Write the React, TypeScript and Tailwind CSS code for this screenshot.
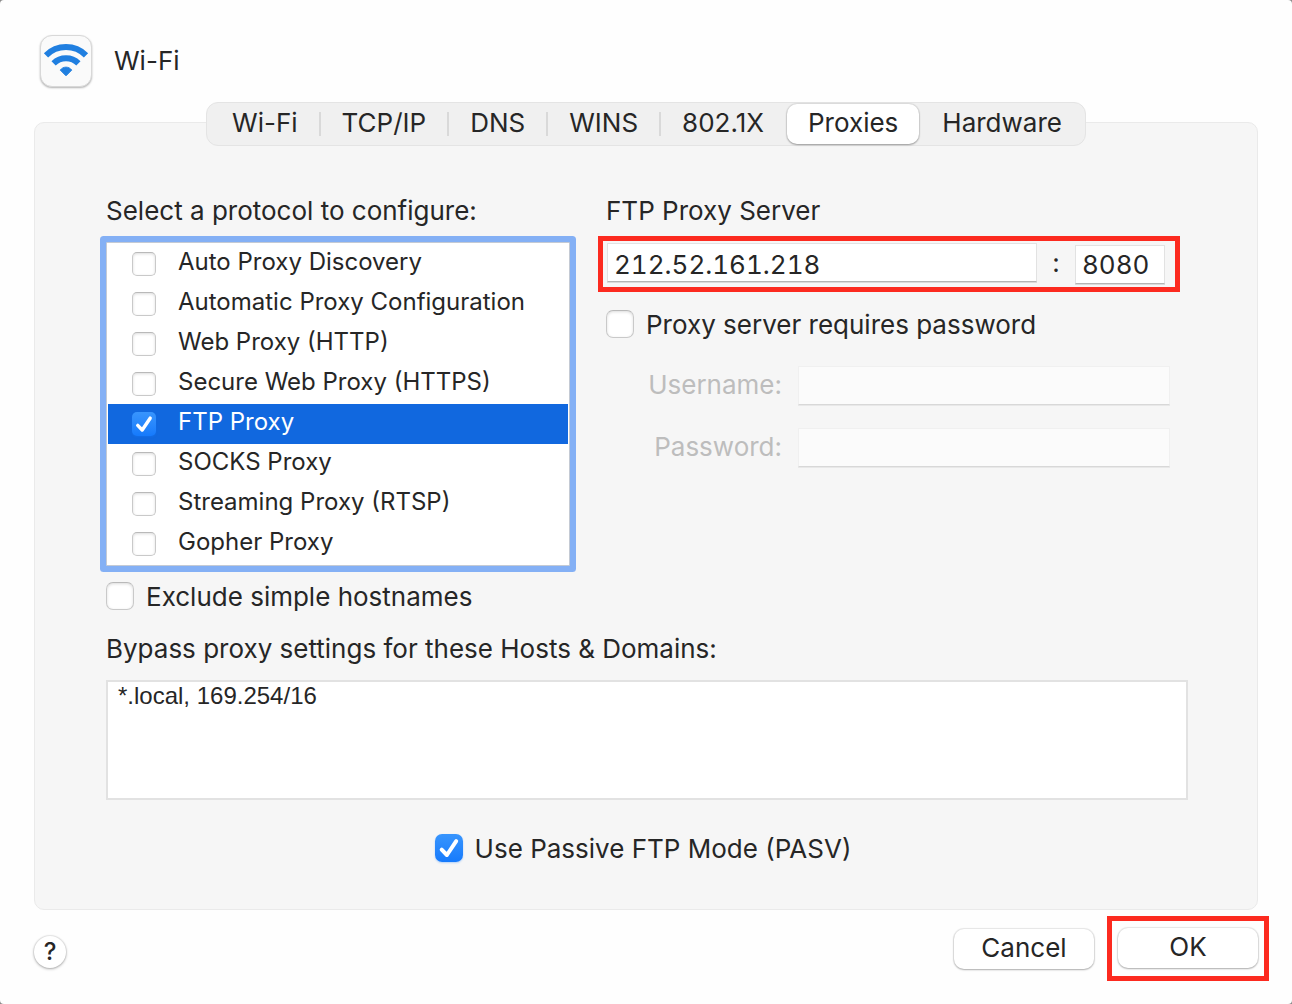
import clsx from "clsx";
import { useState } from "react";

const TABS = ["Wi-Fi", "TCP/IP", "DNS", "WINS", "802.1X", "Proxies", "Hardware"];

const PROTOCOLS = [
  "Auto Proxy Discovery",
  "Automatic Proxy Configuration",
  "Web Proxy (HTTP)",
  "Secure Web Proxy (HTTPS)",
  "FTP Proxy",
  "SOCKS Proxy",
  "Streaming Proxy (RTSP)",
  "Gopher Proxy",
];

const WifiIcon = () => (
  <svg viewBox="1 1 50 50" className="w-full h-full" aria-hidden="true">
    <g fill="none" stroke="#207fe0" strokeWidth="6">
      <path d="M6 20.4a28.3 28.3 0 0 1 40 0" />
      <path d="M13.6 28.4a17.6 17.6 0 0 1 24.8 0" />
    </g>
    <path
      d="M26 40.8 20.3 35.1a7 7 0 0 1 11.4 0Z"
      fill="#207fe0"
      stroke="#207fe0"
      strokeWidth="1"
      strokeLinejoin="round"
    />
  </svg>
);

interface CheckboxProps {
  id: string;
  checked: boolean;
  onChange: () => void;
  small?: boolean;
}

const Checkbox = ({ id, checked, onChange, small = false }: CheckboxProps) => (
  <span className={clsx("relative shrink-0", small ? "size-6" : "size-7")}>
    <input
      id={id}
      type="checkbox"
      checked={checked}
      onChange={onChange}
      className={clsx(
        "block size-full appearance-none",
        small ? "rounded-[5px]" : "rounded-[7px]",
        checked
          ? "bg-linear-to-b from-[#3895fd] to-[#157afc] shadow-[0_1px_2px_rgba(21,122,252,0.3)]"
          : "bg-white border border-[#c9c9c9] border-t-[#b9b9b9] shadow-[inset_0_1px_3px_rgba(0,0,0,0.14)]"
      )}
    />
    {checked && (
      <svg
        viewBox="0 0 28 28"
        className="absolute inset-0 size-full pointer-events-none"
        fill="none"
        stroke="white"
        strokeWidth="4"
        strokeLinecap="round"
        strokeLinejoin="round"
      >
        <path d="M6.7 15.6 11.9 21 21.2 7.2" />
      </svg>
    )}
  </span>
);

const fieldClass =
  "h-[39px] min-w-0 border border-[#e2e2e2] border-b-[#b4b4b4] bg-white px-[6px] text-[26px] tabular-nums shadow-[0_1px_0_#dadada] outline-none";
const disabledFieldClass =
  "h-[39px] min-w-0 flex-1 border border-[#f0f0f0] border-b-[#d8d8d8] bg-[#fbfbfb] px-2 shadow-[0_1px_0_#e8e8e8] outline-none";
const buttonClass =
  "h-10 w-[140px] rounded-[10px] bg-white pb-[2px] shadow-[0_0_1px_1px_rgba(0,0,0,0.09),0_1px_2px_rgba(0,0,0,0.25)]";

const App = () => {
  const [tab, setTab] = useState("Proxies");
  const [selected, setSelected] = useState("FTP Proxy");
  const [enabled, setEnabled] = useState<string[]>(["FTP Proxy"]);
  const [host, setHost] = useState("212.52.161.218");
  const [port, setPort] = useState("8080");
  const [needsPassword, setNeedsPassword] = useState(false);
  const [excludeSimple, setExcludeSimple] = useState(false);
  const [bypass, setBypass] = useState("*.local, 169.254/16");
  const [passive, setPassive] = useState(true);

  const toggleProtocol = (name: string) => {
    setSelected(name);
    setEnabled((prev) =>
      prev.includes(name) ? prev.filter((p) => p !== name) : [...prev, name]
    );
  };

  return (
    <div className="bg-[#8a8a8a]">
      <div className="flex min-h-screen flex-col rounded-[4px] bg-[#fefefe] font-[Inter,sans-serif] text-[26px] leading-8 text-[#262626]">
        <header className="flex items-center gap-[22px] px-10 pt-[35px]">
          <div className="size-[52px] rounded-[12px] border border-[#d8d8d8] bg-[#fafafa] shadow-[0_1px_2px_rgba(0,0,0,0.3)]">
            <WifiIcon />
          </div>
          <h1>Wi-Fi</h1>
        </header>

        {/* Tab bar sits across the top edge of the panel */}
        <div className="relative z-10 mt-[15px] -mb-6 flex justify-center">
          <div
            role="tablist"
            className="flex h-11 items-center rounded-[12px] border border-[#e4e4e4] bg-[#f0f0f0] px-[2px]"
          >
            {TABS.map((name, i) => {
              const active = name === tab;
              const divider = i > 0 && !active && TABS[i - 1] !== tab;
              return (
                <div key={name} className="flex items-center">
                  <span
                    className={clsx("h-6 w-[2px]", divider && "bg-[#d9d9d9]")}
                  />
                  <button
                    type="button"
                    role="tab"
                    aria-selected={active}
                    onClick={() => setTab(name)}
                    className={clsx(
                      "h-10 rounded-[10px] px-[21px] pb-[2px]",
                      active &&
                        "bg-white shadow-[0_0_1px_1px_rgba(0,0,0,0.08),0_1px_2px_rgba(0,0,0,0.3)]"
                    )}
                  >
                    {name}
                  </button>
                </div>
              );
            })}
          </div>
        </div>

        <main className="mx-[34px] flex-1 rounded-[10px] border border-[#eaeaea] bg-[#f6f6f6] pt-[72px] pr-[69px] pb-10 pl-[71px]">
          <div className="grid grid-cols-[minmax(0,464fr)_minmax(0,582fr)] gap-9">
            <section>
              <h2 className="mb-[15px]">Select a protocol to configure:</h2>
              <ul className="rounded-[1px] border border-[#c4cad4] bg-white p-px text-2xl ring-6 ring-[#84b0f5]">
                {PROTOCOLS.map((name, i) => (
                  <li
                    key={name}
                    className={clsx(
                      "flex h-10 items-center gap-[22px] pl-6",
                      name === selected && "bg-[#1168df] text-white"
                    )}
                  >
                    <Checkbox
                      small
                      id={`protocol-${i}`}
                      checked={enabled.includes(name)}
                      onChange={() => toggleProtocol(name)}
                    />
                    <label htmlFor={`protocol-${i}`} className="flex-1 pb-1">
                      {name}
                    </label>
                  </li>
                ))}
              </ul>
              <div className="mt-[14px] flex h-8 items-center gap-3">
                <Checkbox
                  id="exclude"
                  checked={excludeSimple}
                  onChange={() => setExcludeSimple(!excludeSimple)}
                />
                <label htmlFor="exclude" className="pt-[2px]">
                  Exclude simple hostnames
                </label>
              </div>
            </section>

            <section>
              <h2 className="mb-[9px]">FTP Proxy Server</h2>
              <div className="-ml-2 mr-2 flex h-14 border-[5px] border-[#fc2a1f] pt-[2px] pr-[10px] pb-[3px] pl-1">
                <input
                  aria-label="Proxy server address"
                  value={host}
                  onChange={(e) => setHost(e.target.value)}
                  className={clsx(fieldClass, "flex-1 pt-1")}
                />
                <span className="w-[38px] pt-1 text-center">:</span>
                <input
                  aria-label="Proxy server port"
                  value={port}
                  onChange={(e) => setPort(e.target.value)}
                  className={clsx(fieldClass, "w-[90px] self-end")}
                />
              </div>

              <div className="mt-4 flex h-8 items-center gap-3">
                <Checkbox
                  id="needs-password"
                  checked={needsPassword}
                  onChange={() => setNeedsPassword(!needsPassword)}
                />
                <label htmlFor="needs-password" className="pt-[2px]">
                  Proxy server requires password
                </label>
              </div>

              <div className="mt-[26px] mr-[18px] flex flex-col gap-[23px] text-[#bdbdbd]">
                <div className="flex items-center gap-4">
                  <label
                    htmlFor="username"
                    className="w-44 pb-[2px] text-right"
                  >
                    Username:
                  </label>
                  <input
                    id="username"
                    type="text"
                    disabled={!needsPassword}
                    className={disabledFieldClass}
                  />
                </div>
                <div className="flex items-center gap-4">
                  <label
                    htmlFor="password"
                    className="w-44 pb-[2px] text-right"
                  >
                    Password:
                  </label>
                  <input
                    id="password"
                    type="password"
                    disabled={!needsPassword}
                    className={disabledFieldClass}
                  />
                </div>
              </div>
            </section>
          </div>

          <label htmlFor="bypass" className="mt-[21px] block">
            Bypass proxy settings for these Hosts &amp; Domains:
          </label>
          <textarea
            id="bypass"
            value={bypass}
            onChange={(e) => setBypass(e.target.value)}
            className="mt-[15px] block h-[120px] w-full resize-none border-2 border-[#e2e2e2] bg-white px-[10px] font-['Liberation_Sans',sans-serif] text-2xl leading-7 outline-none"
          />

          <div className="mt-8 flex h-8 items-center justify-center gap-3 pr-2">
            <Checkbox
              id="passive"
              checked={passive}
              onChange={() => setPassive(!passive)}
            />
            <label htmlFor="passive" className="pt-[2px]">
              Use Passive FTP Mode (PASV)
            </label>
          </div>
        </main>

        <footer className="mt-[6px] flex items-center pr-[23px] pb-[23px] pl-[34px]">
          <button
            type="button"
            aria-label="Help"
            className="mt-[6px] flex size-8 items-center justify-center rounded-full bg-white text-2xl font-medium shadow-[0_0_1px_1px_rgba(0,0,0,0.07),0_1px_3px_rgba(0,0,0,0.3)]"
          >
            ?
          </button>
          <button
            type="button"
            className={clsx(buttonClass, "mr-[13px] ml-auto")}
          >
            Cancel
          </button>
          <div className="border-[5px] border-[#fc2a1f] px-[6px] pt-[7px] pb-2">
            <button type="button" className={clsx(buttonClass, "block")}>
              OK
            </button>
          </div>
        </footer>
      </div>
    </div>
  );
};

export default App;
